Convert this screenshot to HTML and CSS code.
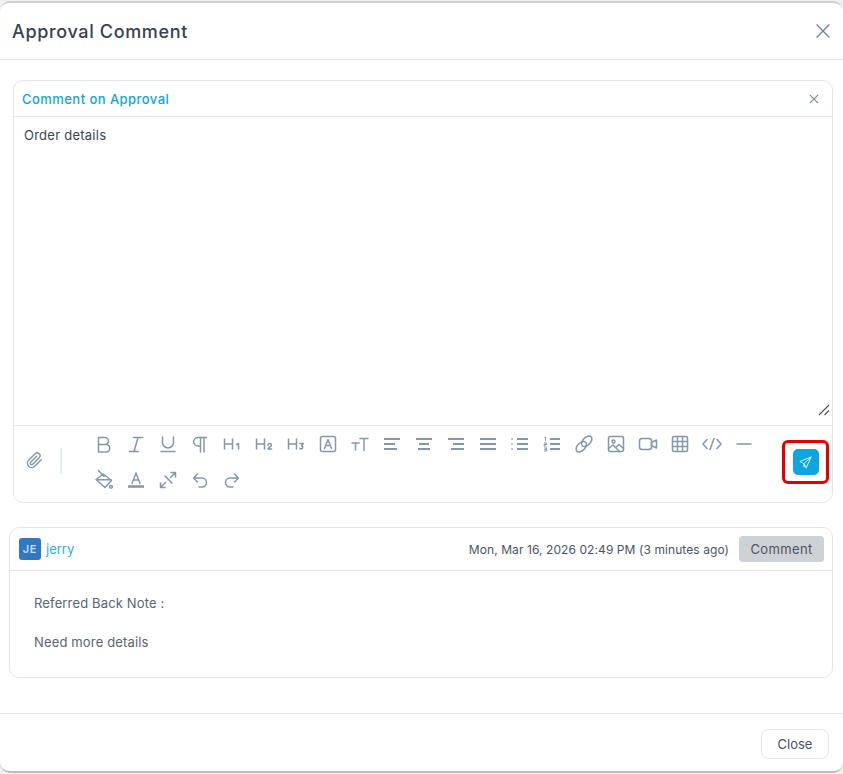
FILE: index.html
```html
<!DOCTYPE html>
<html lang="en">
<head>
<meta charset="utf-8">
<title>Approval Comment</title>
<link rel="stylesheet" href="styles.css">
</head>
<body>
<div class="modal">
  <header class="modal-head">
    <h1 class="modal-title">Approval Comment</h1>
    <svg class="close-lg" viewBox="0 0 24 24"><path d="M5 5l14 14M19 5L5 19"/></svg>
  </header>
  <main class="modal-body">
    <section class="editor">
      <div class="editor-head">
        <span class="editor-title">Comment on Approval</span>
        <svg class="close-sm" viewBox="0 0 24 24"><path d="M5 5l14 14M19 5L5 19"/></svg>
      </div>
      <div class="input-wrap">
        <textarea class="editor-input">Order details</textarea>
        <svg class="grip" viewBox="0 0 12 12"><path d="M1 11L11 1M6.500 11L11 6.500"/></svg>
      </div>
      <div class="editor-foot">
        <div class="attach">
          <svg class="ic clip" viewBox="0 0 24 24"><path d="M21.44 11.05l-9.19 9.19a6 6 0 0 1-8.49-8.49l9.19-9.19a4 4 0 0 1 5.66 5.66l-9.2 9.19a2 2 0 0 1-2.83-2.83l8.49-8.48"/></svg>
        </div>
        <div class="divider"></div>
        <div class="tools">
          <span class="tool"><svg class="ic" viewBox="0 0 24 24"><path d="M6.500 5.500h6.500a3.500 3.500 0 0 1 0 7H6.500zM6.500 12.500h7.500a3.700 3.700 0 0 1 0 7.500H6.500z"/></svg></span>
          <span class="tool"><svg class="ic" viewBox="0 0 24 24"><path d="M9.500 5.500h9M5.500 19.500h9M14 5.500l-4 14"/></svg></span>
          <span class="tool"><svg class="ic" viewBox="0 0 24 24"><path d="M6.500 5v5.500a5.500 5.500 0 0 0 11 0V5M5 19.500h14"/></svg></span>
          <span class="tool"><svg class="ic" viewBox="0 0 24 24"><path d="M18.500 5.500H10a4.300 4.300 0 0 0 0 8.600h2.500M12.500 5.500v14.500M16 5.500v14.500"/></svg></span>
          <span class="tool"><svg class="ic" viewBox="0 0 24 24"><path d="M4.500 7v10M12.500 7v10M4.500 12h8M16.500 12.500l2-1V17"/></svg></span>
          <span class="tool"><svg class="ic" viewBox="0 0 24 24"><path d="M4.500 7v10M12.500 7v10M4.500 12h8M16 13.200a1.700 1.700 0 0 1 3.400 0c0 1.500-3.400 2.400-3.400 3.800h3.600"/></svg></span>
          <span class="tool"><svg class="ic" viewBox="0 0 24 24"><path d="M4.500 7v10M12.500 7v10M4.500 12h8M16 11.500h3.300l-1.800 2.200a1.600 1.600 0 1 1-1.600 2.500"/></svg></span>
          <span class="tool"><svg class="ic" viewBox="0 0 24 24"><rect x="4.500" y="4.500" width="15" height="15" rx="2"/><path d="M8.500 16.500L12 7.500l3.500 9M9.700 13.500h4.600"/></svg></span>
          <span class="tool"><svg class="ic" viewBox="0 0 24 24"><path d="M12 6.500h8M16 6.500v12M4 11h7M7.500 11v7"/></svg></span>
          <span class="tool"><svg class="ic thick" viewBox="0 0 24 24"><path d="M4 7h16M4 12h11M4 17h13"/></svg></span>
          <span class="tool"><svg class="ic thick" viewBox="0 0 24 24"><path d="M4 7h16M7 12h10M6 17h12"/></svg></span>
          <span class="tool"><svg class="ic thick" viewBox="0 0 24 24"><path d="M4 7h16M9 12h11M7 17h13"/></svg></span>
          <span class="tool"><svg class="ic thick" viewBox="0 0 24 24"><path d="M4 7h16M4 12h16M4 17h16"/></svg></span>
          <span class="tool"><svg class="ic thick" viewBox="0 0 24 24"><path d="M9 7h11M9 12h11M9 17h11"/><path class="fine" d="M4 6v2M4 11v2M4 16v2"/></svg></span>
          <span class="tool"><svg class="ic thick" viewBox="0 0 24 24"><path d="M10 7h10M10 12h10M10 17h10"/><path class="fine" d="M4.500 5.500l1-.5v4M4 11h2.500v1.500H4V14h2.500M4 16h2.500v3H4M4.500 17.500h2"/></svg></span>
          <span class="tool"><svg class="ic" viewBox="0 0 24 24"><ellipse cx="9.300" cy="14.700" rx="6.300" ry="3.800" transform="rotate(-45 9.300 14.700)"/><ellipse cx="14.700" cy="9.300" rx="6.300" ry="3.800" transform="rotate(-45 14.700 9.300)"/></svg></span>
          <span class="tool"><svg class="ic" viewBox="0 0 24 24"><rect x="4.500" y="4.500" width="15" height="15" rx="2"/><circle cx="9.500" cy="9.500" r="1.500"/><path d="M4.500 16.500l4.500-3.500 6.500 6.500M12 15.500l3-3 4.500 4"/></svg></span>
          <span class="tool"><svg class="ic" viewBox="0 0 24 24"><rect x="3.500" y="6.500" width="12" height="11" rx="2.500"/><path d="M15.500 10.500l5-2.500v8l-5-2.500z"/></svg></span>
          <span class="tool"><svg class="ic" viewBox="0 0 24 24"><rect x="4.500" y="4.500" width="15" height="15" rx="2"/><path d="M9.500 4.500v15M14.500 4.500v15M4.500 9.500h15M4.500 14.500h15"/></svg></span>
          <span class="tool"><svg class="ic" viewBox="0 0 24 24"><path d="M7 7.500L3 12l4 4.500M17 7.500l4 4.500-4 4.500M14 6.500l-4 11"/></svg></span>
          <span class="tool"><svg class="ic" viewBox="0 0 24 24"><path d="M5 12h14"/></svg></span>
          <span class="tool"><svg class="ic" viewBox="0 0 24 24"><path d="M6.500 2.500l5.500 6M11.300 6L19.500 12.500 13 19.500 4 11.500z"/><path d="M4.500 11.800h14.500"/><circle cx="19" cy="18.800" r="1.400"/></svg></span>
          <span class="tool"><svg class="ic" viewBox="0 0 24 24"><path d="M8 15.500L12 5l4 10.500M9.300 12h5.400"/><path class="bar" d="M4 18.500h16"/></svg></span>
          <span class="tool"><svg class="ic" viewBox="0 0 24 24"><path d="M4.500 19.500l5-5M14.500 9.500l5-5M15 4.500h4.500V9M4.500 15v4.500H9M9 8l7 7"/></svg></span>
          <span class="tool"><svg class="ic" viewBox="0 0 24 24"><path d="M9.500 6L5.500 10l4 4M5.500 10H14a4.500 4.500 0 0 1 0 9h-3"/></svg></span>
          <span class="tool"><svg class="ic" viewBox="0 0 24 24"><path d="M14.500 6l4 4-4 4M18.500 10H10a4.500 4.500 0 0 0 0 9h3"/></svg></span>
        </div>
        <div class="send-ring">
          <button class="send" type="button" aria-label="Send">
            <svg viewBox="0 0 24 24"><path d="M21 3L3 10.500l6.500 3.500L13 21zM21 3L9.500 14v5l2.500-2.500"/></svg>
          </button>
        </div>
      </div>
    </section>
    <section class="comment">
      <div class="comment-head">
        <span class="avatar">JE</span>
        <span class="author">jerry</span>
        <span class="stamp">Mon, Mar 16, 2026 02:49 PM (3 minutes ago)</span>
        <span class="tag">Comment</span>
      </div>
      <div class="comment-body">
        <p class="note">Referred Back Note :</p>
        <p class="note">Need more details</p>
      </div>
    </section>
  </main>
  <footer class="modal-foot">
    <button class="btn-close" type="button">Close</button>
  </footer>
</div>
</body>
</html>
```

FILE: styles.css
```css
* { box-sizing: border-box; }
html, body { margin: 0; padding: 0; }
body {
  background: #f1f1f1;
  height: 774px;
  overflow: hidden;
  font-family: "Inter", "Liberation Sans", sans-serif;
  padding-top: 1px;
}
.modal {
  width: 843px;
  height: 772px;
  background: #fff;
  border-top: 2px solid #cfcfcf;
  border-bottom: 2px solid #bdbdbd;
  border-radius: 10px;
  display: flex;
  flex-direction: column;
}
.modal-head {
  height: 57px;
  flex: none;
  display: flex;
  align-items: center;
  justify-content: space-between;
  padding: 0 9px 0 12px;
  border-bottom: 1px solid #e2e7ef;
}
.modal-title {
  margin: 0;
  font-size: 18px;
  font-weight: 500;
  letter-spacing: 0.65px;
  color: #364152;
}
.close-lg, .close-sm { fill: none; stroke: #74879c; stroke-width: 1.5; }
.close-lg { width: 22px; height: 22px; }
.close-sm { width: 14px; height: 14px; stroke-width: 2; }
.modal-body { flex: 1; padding: 20px 10px 0 9px; }
.editor {
  margin-left: 4px;
  height: 423px;
  border: 1px solid #e2e7ef;
  border-radius: 10px;
  display: flex;
  flex-direction: column;
}
.editor-head {
  height: 36px;
  flex: none;
  display: flex;
  align-items: center;
  justify-content: space-between;
  padding: 0 11px 0 8px;
  border-bottom: 1px solid #e2e7ef;
}
.editor-title { font-size: 13px; font-weight: 500; letter-spacing: 0.45px; color: #0ea5e0; }
.input-wrap {
  position: relative;
  flex: none;
  height: 308px;
}
.editor-input {
  display: block;
  width: 100%;
  height: 100%;
  border: 0;
  outline: 0;
  padding: 9px 10px;
  resize: none;
  background: transparent;
  font-family: "Inter", "Liberation Sans", sans-serif;
  font-size: 13px;
  letter-spacing: 0.25px;
  line-height: 18px;
  color: #3b4552;
}
.grip {
  position: absolute;
  right: 2px;
  bottom: 9px;
  width: 12px;
  height: 12px;
  fill: none;
  stroke: #555;
  stroke-width: 1.2;
}
.editor-foot {
  flex: 1;
  display: flex;
  align-items: flex-start;
  border-top: 1px solid #e2e7ef;
}
.attach {
  width: 40px;
  height: 68px;
  display: flex;
  align-items: center;
  justify-content: center;
  padding-left: 1px;
}
.divider {
  width: 2px;
  height: 26px;
  margin: 22px 0 0 6px;
  background: #e3edf7;
}
.tools {
  width: 680px;
  margin-left: 26px;
  display: flex;
  flex-wrap: wrap;
}
.tool {
  width: 32px;
  height: 36px;
  display: flex;
  align-items: center;
  justify-content: center;
}
.ic {
  width: 24px;
  height: 24px;
  fill: none;
  stroke: #8497ab;
  stroke-width: 1.5;
  stroke-linecap: round;
  stroke-linejoin: round;
}
.clip { width: 17px; height: 17px; stroke-width: 2; }
.thick { stroke-width: 1.8; stroke-linecap: butt; }
.fine { stroke-width: 1; }
.bar { stroke-width: 2.6; stroke-linecap: butt; }
.send-ring {
  flex: none;
  width: 47px;
  height: 44px;
  margin: 14px 0 0 14px;
  border: 3px solid #e00000;
  border-radius: 6px;
  display: flex;
  align-items: center;
  justify-content: center;
}
.send {
  width: 26px;
  height: 26px;
  padding: 0;
  border: 0;
  border-radius: 5px;
  background: #0ea5e0;
  display: flex;
  align-items: center;
  justify-content: center;
}
.send svg {
  width: 15px;
  height: 15px;
  fill: none;
  stroke: #fff;
  stroke-width: 1.3;
  stroke-linejoin: round;
}
.comment {
  margin-top: 24px;
  height: 151px;
  border: 1px solid #e2e7ef;
  border-radius: 10px;
}
.comment-head {
  height: 43px;
  display: flex;
  align-items: center;
  padding: 0 8px 0 9px;
  border-bottom: 1px solid #e2e7ef;
}
.avatar {
  width: 22px;
  height: 22px;
  border-radius: 3px;
  background: #2f78c4;
  color: #c9def3;
  font-size: 11px;
  font-weight: 600;
  letter-spacing: 0.8px;
  display: flex;
  align-items: center;
  justify-content: center;
}
.author { margin-left: 5px; font-size: 13px; color: #29b0e8; }
.stamp { margin-left: auto; font-size: 12px; letter-spacing: 0.08px; color: #4b5563; }
.tag {
  margin-left: 10px;
  width: 85px;
  height: 26px;
  border-radius: 4px;
  background: #ced1d5;
  color: #4b5563;
  font-size: 13px;
  letter-spacing: 0.35px;
  display: flex;
  align-items: center;
  justify-content: center;
}
.comment-body { padding: 23px 24px 0; }
.note {
  margin: 0 0 21px;
  font-size: 13px;
  letter-spacing: 0.15px;
  line-height: 18px;
  color: #5b6470;
}
.modal-foot {
  height: 58px;
  flex: none;
  display: flex;
  align-items: flex-start;
  justify-content: flex-end;
  padding: 15px 14px 0 0;
  border-top: 1px solid #e2e7ef;
}
.btn-close {
  width: 68px;
  height: 30px;
  border: 1px solid #e2e7ef;
  border-radius: 8px;
  background: #fff;
  font-family: "Inter", "Liberation Sans", sans-serif;
  font-size: 13px;
  color: #4a5361;
}
```
